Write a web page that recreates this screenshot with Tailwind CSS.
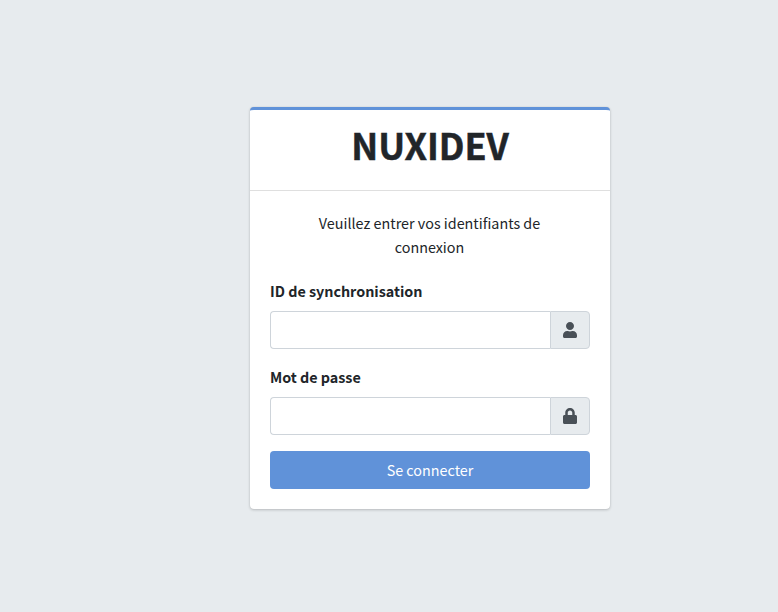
<!DOCTYPE html>
<html lang="fr">
<head>
<meta charset="utf-8">
<title>NUXIDEV</title>
<script src="https://cdn.jsdelivr.net/npm/@tailwindcss/browser@4"></script>
</head>
<body class="h-[612px] overflow-hidden bg-[#e7ebee] pl-[82px] pt-[107px] font-['Noto_Sans_CJK_JP',sans-serif] text-[14.35px] leading-6 text-[#212529]">
<main class="mx-auto flex h-[402px] w-[360px] flex-col rounded bg-white border-t-[3px] border-[#6092d9] shadow-[0_0_1px_rgba(0,0,0,0.125),0_1px_3px_rgba(0,0,0,0.2)]">
  <header class="flex h-[81px] items-start justify-center border-b border-[#dfdfdf] pt-2.5">
    <h1 class="text-[36px] font-bold leading-[48px] tracking-[-0.1px] [-webkit-text-stroke:0.5px_#212529]">NUXIDEV</h1>
  </header>
  <form class="flex flex-col p-5">
    <p class="mb-5 pl-5 pr-[21px] text-center">Veuillez entrer vos identifiants de<br>connexion</p>
    <label for="sync" class="mb-2 font-bold tracking-[-0.02px]">ID de synchronisation</label>
    <div class="mb-4 flex h-[38px]">
      <input id="sync" type="text" class="w-[280px] rounded-l border border-r-0 border-[#ced4da] bg-white px-3 outline-none">
      <span class="flex w-10 items-center justify-center rounded-r border border-[#ced4da] bg-[#e7ebee] pr-px">
        <svg class="h-4 w-3.5 fill-[#495057]" viewBox="0 0 448 512"><path d="M224 256c70.7 0 128-57.3 128-128S294.7 0 224 0 96 57.3 96 128s57.3 128 128 128zm89.6 32h-16.7c-22.2 10.2-46.9 16-72.9 16s-50.6-5.8-72.9-16h-16.7C60.2 288 0 348.2 0 422.4V464c0 26.5 21.5 48 48 48h352c26.5 0 48-21.5 48-48v-41.6c0-74.2-60.2-134.4-134.4-134.4z"/></svg>
      </span>
    </div>
    <label for="pass" class="mb-2 font-bold tracking-[-0.02px]">Mot de passe</label>
    <div class="mb-4 flex h-[38px]">
      <input id="pass" type="password" class="w-[280px] rounded-l border border-r-0 border-[#ced4da] bg-white px-3 outline-none">
      <span class="flex w-10 items-center justify-center rounded-r border border-[#ced4da] bg-[#e7ebee] pr-px">
        <svg class="h-4 w-3.5 fill-[#495057]" viewBox="0 0 448 512"><path d="M400 224h-24v-72C376 68.2 307.8 0 224 0S72 68.2 72 152v72H48c-26.5 0-48 21.5-48 48v192c0 26.5 21.5 48 48 48h352c26.5 0 48-21.5 48-48V272c0-26.5-21.5-48-48-48zm-104 0H152v-72c0-39.7 32.3-72 72-72s72 32.3 72 72v72z"/></svg>
      </span>
    </div>
    <button type="button" class="h-[38px] rounded bg-[#6092d9] text-white">Se connecter</button>
  </form>
</main>
</body>
</html>
